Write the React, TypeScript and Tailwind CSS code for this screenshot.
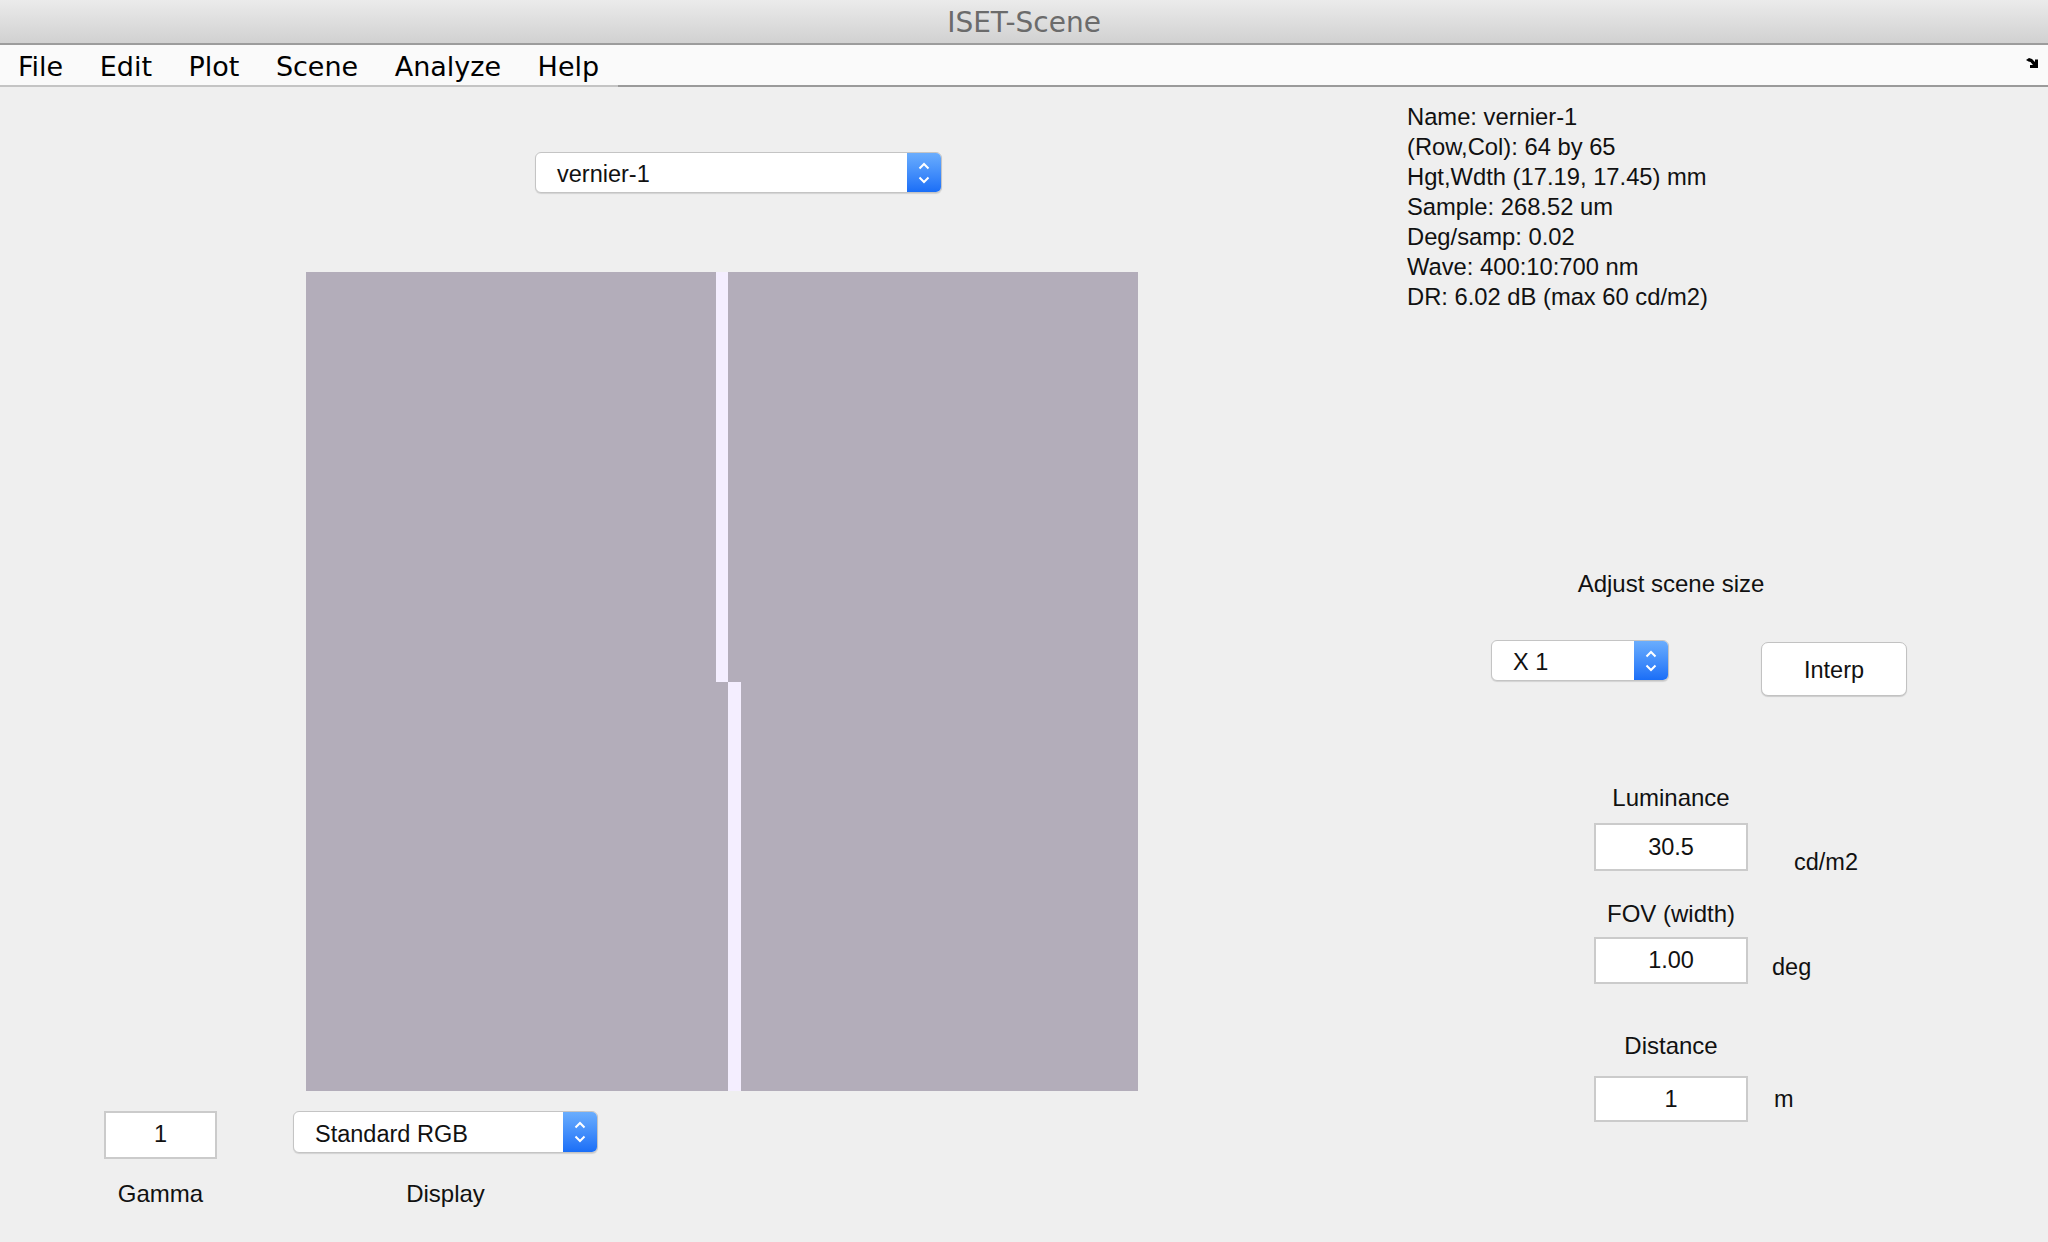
import React from "react";

const HELV = { fontFamily: '"Liberation Sans", Arial, sans-serif' };
const LUC = { fontFamily: '"DejaVu Sans", "Lucida Grande", sans-serif' };

function Chevrons() {
  return (
    <svg width="12" height="22" viewBox="0 0 12 22" fill="none">
      <path d="M1.5 6.5 L6 2 L10.5 6.5" stroke="white" strokeWidth="2" />
      <path d="M1.5 15.5 L6 20 L10.5 15.5" stroke="white" strokeWidth="2" />
    </svg>
  );
}

function Popup({ label, width, h = "h-[41px]" }: { label: string; width: string; h?: string }) {
  return (
    <div
      className={`${width} ${h} flex rounded-[6px] border border-[#c4c4c4] bg-white shadow-[0_1px_1px_rgba(0,0,0,0.12)] overflow-hidden`}
    >
      <div className="flex-1 flex items-center pl-[21px] pt-[5px] text-[23.5px] text-[#111]" style={HELV}>
        {label}
      </div>
      <div className="w-[34px] flex items-center justify-center bg-gradient-to-b from-[#6aadfd] to-[#1a6ef7]">
        <Chevrons />
      </div>
    </div>
  );
}

function Field({ value, h }: { value: string; h: string }) {
  return (
    <div
      className={`w-[154px] ${h} bg-white border-2 border-[#cbcbcb] flex items-center justify-center pt-[1px] text-[23.5px] text-[#111]`}
      style={HELV}
    >
      {value}
    </div>
  );
}

function Label({ text }: { text: string }) {
  return (
    <div className="w-[154px] flex justify-center">
      <span className="whitespace-nowrap text-[24px] leading-[30px] text-[#111]" style={HELV}>
        {text}
      </span>
    </div>
  );
}

export default function App() {
  const info = [
    "Name: vernier-1",
    "(Row,Col): 64 by 65",
    "Hgt,Wdth (17.19, 17.45) mm",
    "Sample: 268.52 um",
    "Deg/samp: 0.02",
    "Wave: 400:10:700 nm",
    "DR: 6.02 dB (max 60 cd/m2)",
  ];
  const menus = ["File", "Edit", "Plot", "Scene", "Analyze", "Help"];
  return (
    <div className="w-[2048px] h-[1242px] bg-[#efefef] flex flex-col overflow-hidden">
      {/* Title bar */}
      <div className="h-[45px] shrink-0 bg-gradient-to-b from-[#ebebeb] via-[#dedede] to-[#d1d1d1] border-b-2 border-[#9c9c9c] flex items-center justify-center">
        <span className="text-[28px] text-[#6b6b6b] leading-none mt-[3px]" style={LUC}>
          ISET-Scene
        </span>
      </div>
      {/* Menu bar */}
      <div className="h-[42px] shrink-0 bg-[#fafafa] flex flex-col">
        <div className="flex-1 flex items-center pl-[18px] pr-[8px]">
          <div className="flex gap-[36.5px] mt-[3px] text-[27px] leading-none text-black" style={LUC}>
            {menus.map((m) => (
              <span key={m}>{m}</span>
            ))}
          </div>
          <div className="ml-auto mt-[-4px]">
            <svg width="14" height="11" viewBox="0 0 14 11">
              <path
                d="M0 2 L3 0 L6 1 L9 4 L9 1.5 L12 1.5 L12 10 L4 10 L4 7 L7 7 L4.5 4 L2.5 3.5 Z"
                fill="black"
              />
            </svg>
          </div>
        </div>
        <div className="h-[2px] flex">
          <div className="w-[618px] bg-[#c4c4c4]" />
          <div className="flex-1 bg-[#9a9a9a]" />
        </div>
      </div>
      {/* Content */}
      <div className="flex flex-1">
        {/* Left column */}
        <div className="w-[1160px] shrink-0 flex flex-col">
          <div className="pt-[65px] pl-[535px]">
            <Popup label="vernier-1" width="w-[407px]" />
          </div>
          <div className="mt-[79px] ml-[306px] w-[832px] h-[819px]">
            <svg width="832" height="819" viewBox="0 0 832 819" shapeRendering="crispEdges">
              <rect x="0" y="0" width="832" height="819" fill="#b3adba" />
              <rect x="409.6" y="0" width="12.8" height="409.6" fill="#f4eeff" />
              <rect x="422.4" y="409.6" width="12.8" height="409.6" fill="#f4eeff" />
            </svg>
          </div>
          <div className="mt-[20px] pl-[104px] flex items-start">
            <div className="w-[113px] flex flex-col items-center">
              <div
                className="w-[113px] h-[48px] bg-white border-2 border-[#cbcbcb] flex items-center justify-center text-[23.5px] text-[#111]"
                style={HELV}
              >
                1
              </div>
              <span className="mt-[20px] text-[24px] leading-[30px] text-[#111]" style={HELV}>
                Gamma
              </span>
            </div>
            <div className="ml-[76px] w-[305px] flex flex-col items-center">
              <Popup label="Standard RGB" width="w-[305px]" h="h-[42px]" />
              <span className="mt-[26px] text-[24px] leading-[30px] text-[#111]" style={HELV}>
                Display
              </span>
            </div>
          </div>
        </div>
        {/* Right column */}
        <div className="flex-1 flex flex-col">
          <div className="pt-[15px] pl-[247px] text-[23.75px] leading-[30px] text-[#111]" style={HELV}>
            {info.map((l) => (
              <div key={l}>{l}</div>
            ))}
          </div>
          <div className="mt-[257px] pl-[434px]">
            <Label text="Adjust scene size" />
          </div>
          <div className="mt-[41px] pl-[331px] flex items-start">
            <Popup label="X 1" width="w-[178px]" />
            <div
              className="ml-[92px] mt-[2px] w-[146px] h-[54px] rounded-[7px] bg-white border border-[#c2c2c2] shadow-[0_1px_1px_rgba(0,0,0,0.15)] flex items-center justify-center pt-[3px] text-[23.5px] text-[#111]"
              style={HELV}
            >
              Interp
            </div>
          </div>
          <div className="mt-[87px] pl-[434px]">
            <Label text="Luminance" />
          </div>
          <div className="mt-[10px] pl-[434px] h-[48px] flex items-start">
            <Field value="30.5" h="h-[48px]" />
            <span className="ml-[46px] mt-[24px] text-[23.5px] leading-[30px] text-[#111]" style={HELV}>
              cd/m2
            </span>
          </div>
          <div className="mt-[28px] pl-[434px]">
            <Label text="FOV (width)" />
          </div>
          <div className="mt-[8px] pl-[434px] h-[47px] flex items-start">
            <Field value="1.00" h="h-[47px]" />
            <span className="ml-[24px] mt-[15px] text-[23.5px] leading-[30px] text-[#111]" style={HELV}>
              deg
            </span>
          </div>
          <div className="mt-[47px] pl-[434px]">
            <Label text="Distance" />
          </div>
          <div className="mt-[15px] pl-[434px] h-[46px] flex items-start">
            <Field value="1" h="h-[46px]" />
            <span className="ml-[26px] mt-[8px] text-[23.5px] leading-[30px] text-[#111]" style={HELV}>
              m
            </span>
          </div>
        </div>
      </div>
    </div>
  );
}
